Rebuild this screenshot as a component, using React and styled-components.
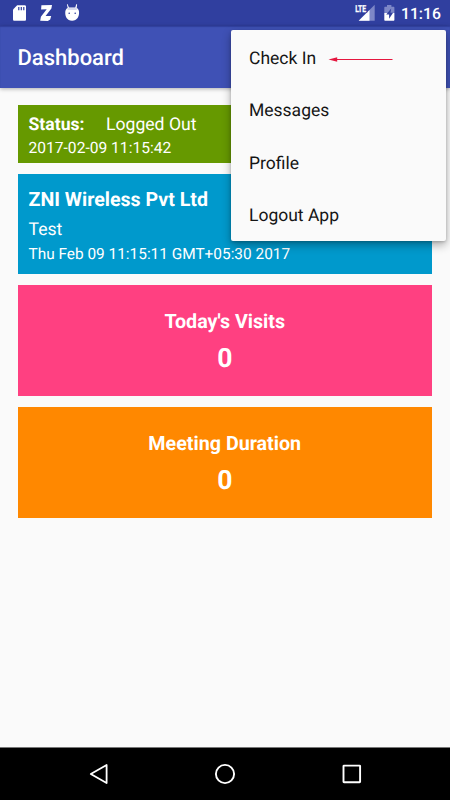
import React from "react";
import styled, { createGlobalStyle } from "styled-components";

const GlobalStyle = createGlobalStyle`
  * {
    box-sizing: border-box;
  }
  body {
    margin: 0;
    background: #fafafa;
    font-family: Roboto, "Liberation Sans", sans-serif;
    text-rendering: geometricPrecision;
  }
`;

const Screen = styled.div`
  position: relative;
  display: flex;
  flex-direction: column;
  width: 450px;
  height: 800px;
  overflow: hidden;
  background: #fafafa;
`;

const StatusBar = styled.div`
  display: flex;
  justify-content: space-between;
  height: 26px;
  background: #303f9f;
`;

const Clock = styled.span`
  display: flex;
  justify-content: flex-end;
  width: 50px;
  padding-right: 9px;
  font-size: 15.8px;
  font-weight: 500;
  line-height: 28px;
  color: #fff;
  white-space: nowrap;
`;

const StatusGroup = styled.div`
  display: flex;
`;

const Toolbar = styled.header`
  display: flex;
  align-items: center;
  height: 62px;
  padding: 3px 17.5px 0;
  background: #3f51b5;
  box-shadow: inset 0 1px 1px rgba(20, 30, 110, 0.35),
    0 1px 4px rgba(0, 0, 0, 0.3);
`;

const Title = styled.h1`
  margin: 0;
  font-size: 22px;
  font-weight: 500;
  color: #fff;
`;

const Content = styled.main`
  flex: 1;
  display: flex;
  flex-direction: column;
  gap: 11px;
  padding: 17px 18px 0 17.5px;
`;

const Card = styled.section`
  height: ${(props) => props.$height}px;
  padding: ${(props) => props.$pad || "0"};
  background: ${(props) => props.$color};
  color: #fff;
`;

const Line = styled.div`
  display: flex;
  align-items: center;
  justify-content: ${(props) => (props.$center ? "center" : "flex-start")};
  height: ${(props) => props.$height}px;
  font-size: ${(props) => props.$size}px;
  font-weight: ${(props) => (props.$bold ? 700 : 400)};
  white-space: nowrap;
`;

const Label = styled.strong`
  width: 77.5px;
  font-weight: 700;
`;

const Menu = styled.nav`
  position: absolute;
  top: 30px;
  left: 231px;
  width: 215px;
  height: 210.5px;
  border-radius: 2px;
  background: #fafafa;
  box-shadow: 0 4px 10px rgba(0, 0, 0, 0.32), 0 1px 3px rgba(0, 0, 0, 0.18);
`;

const MenuItem = styled.div`
  display: flex;
  align-items: center;
  gap: 12px;
  height: 52.5px;
  padding: 5px 18px 0;
  font-size: 17.5px;
  color: #151515;
`;

const NavBar = styled.footer`
  display: flex;
  height: 53px;
  border-top: 1px solid #777;
  background: #000;
`;

const StatusIcons = () => (
  <svg width="90" height="26" viewBox="0 0 90 26">
    <path
      fill="#fff"
      d="M17.2 5.2h7.3c1 0 1.5.5 1.5 1.5v12.5c0 1-.5 1.5-1.5 1.5h-10c-1 0-1.5-.5-1.5-1.5V9.4z"
    />
    <path stroke="#303f9f" strokeWidth="1.2" d="M18.8 7v3.2M21.3 7v3.2M23.8 7v3.2" />
    <path
      fill="#fff"
      d="M41.4 5.3l10.6-.2-.6 3.3-5.8 7.6 5.6.1-1 3.5-2.4 1.4-7.6-.2.7-4 5.8-7.6-5.6.4z"
    />
    <path
      fill="#fff"
      d="M67.7 4.2l1.2 3.2h6.4l.9-3.2h.9l-.4 3.8c1.4.6 2.2 2 2.3 3.6.5 5-1.8 9.2-6.9 9.2s-7.3-4.2-6.8-9.2c.2-1.6 1-3 2.4-3.6l-.8-3.8z"
    />
    <path stroke="#9aa2d2" strokeWidth=".8" d="M67.6 9h9.2" />
    <circle cx="69.2" cy="13.2" r=".8" fill="#303f9f" />
    <circle cx="75.2" cy="13.2" r=".8" fill="#303f9f" />
  </svg>
);

const LteLabel = styled.text`
  font-family: Roboto, sans-serif;
  font-size: 9.6px;
  font-weight: 700;
  fill: #fff;
  stroke: #fff;
  stroke-width: 0.3px;
`;

const SignalIcons = () => (
  <svg width="50" height="26" viewBox="350 0 50 26">
    <path fill="#7d87c7" d="M374.7 4.7v16h-16z" />
    <path fill="#fff" d="M369.5 10v10.7h-10.8z" />
    <path fill="#303f9f" d="M355 4h12.2v8.8H355z" />
    <LteLabel x="355.2" y="12.3" textLength="11" lengthAdjust="spacingAndGlyphs">
      LTE
    </LteLabel>
    <path
      fill="#7d87c7"
      d="M387 5h4.4v1.8h2c.7 0 1 .3 1 1V13h-10.1V7.8c0-.7.3-1 1-1h1.7z"
    />
    <path fill="#fff" d="M384.3 13h10.1v6.8c0 .6-.4 1-1 1h-8.1c-.6 0-1-.4-1-1z" />
    <path fill="#303f9f" d="M391.2 8.6l-5 6h2.9v4.2l4-6h-2.6z" />
  </svg>
);

const RedArrow = () => (
  <svg width="66" height="8" viewBox="0 0 66 8">
    <path stroke="#e5173f" strokeWidth="1.1" d="M7 4.5h57.5" />
    <path fill="#e5173f" d="M.5 4.5l8.7-2.3v4.6z" />
  </svg>
);

const NavIcons = () => (
  <svg width="450" height="52" viewBox="0 748 450 52" fill="none" stroke="#fff">
    <path
      strokeWidth="1.8"
      strokeLinejoin="round"
      d="M106.6 765v18L90.8 774z"
    />
    <circle cx="225" cy="774" r="9.1" strokeWidth="1.9" />
    <rect x="343.5" y="765.6" width="16.6" height="16.6" rx=".5" strokeWidth="1.9" />
  </svg>
);

const menuItems = ["Check In", "Messages", "Profile", "Logout App"];

const App = () => {
  return (
    <Screen>
      <GlobalStyle />
      <StatusBar>
        <StatusIcons />
        <StatusGroup>
          <SignalIcons />
          <Clock>11:16</Clock>
        </StatusGroup>
      </StatusBar>
      <Toolbar>
        <Title>Dashboard</Title>
      </Toolbar>
      <Content>
        <Card $color="#669900" $height={58} $pad="8px 11px">
          <Line $height={23} $size={17.6}>
            <Label>Status:</Label>
            <span>Logged Out</span>
          </Line>
          <Line $height={23} $size={15.6}>
            2017-02-09 11:15:42
          </Line>
        </Card>
        <Card $color="#0099cc" $height={100} $pad="9px 11px">
          <Line $height={32} $size={19.6} $bold>
            ZNI Wireless Pvt Ltd
          </Line>
          <Line $height={30} $size={17.6}>
            Test
          </Line>
          <Line $height={18} $size={15.4}>
            Thu Feb 09 11:15:11 GMT+05:30 2017
          </Line>
        </Card>
        <Card $color="#ff4081" $height={111} $pad="21px 0">
          <Line $height={30} $size={19.7} $bold $center>
            Today's Visits
          </Line>
          <Line $height={44} $size={26.5} $bold $center>
            0
          </Line>
        </Card>
        <Card $color="#ff8800" $height={111} $pad="21px 0">
          <Line $height={30} $size={19.7} $bold $center>
            Meeting Duration
          </Line>
          <Line $height={44} $size={26.5} $bold $center>
            0
          </Line>
        </Card>
      </Content>
      <NavBar>
        <NavIcons />
      </NavBar>
      <Menu>
        {menuItems.map((item) => (
          <MenuItem key={item}>
            <span>{item}</span>
            {item === "Check In" && <RedArrow />}
          </MenuItem>
        ))}
      </Menu>
    </Screen>
  );
};

export default App;
